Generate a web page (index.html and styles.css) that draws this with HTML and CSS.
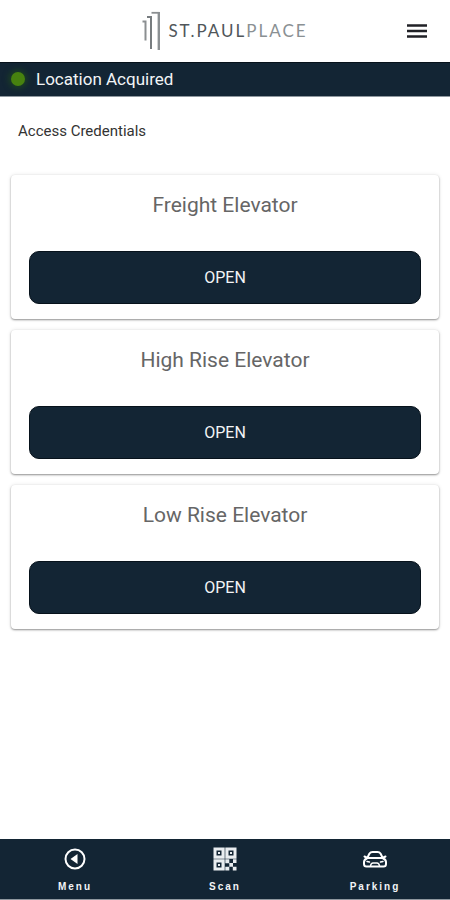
FILE: index.html
```html
<!DOCTYPE html>
<html lang="en">
<head>
<meta charset="utf-8">
<meta name="viewport" content="width=device-width, initial-scale=1">
<title>St. Paul Place</title>
<link rel="stylesheet" href="styles.css">
</head>
<body>
<header class="topbar">
  <a class="brand" href="#" aria-label="St. Paul Place home">
    <svg class="brand-mark" width="20" height="40" viewBox="0 0 20 40" fill="none" aria-hidden="true">
      <path d="M0.500 10.500h3v19" stroke="#8b8f91" stroke-width="2"/>
      <path d="M5 6h4v32" stroke="#777c7f" stroke-width="2"/>
      <path d="M9.500 1.800h8" stroke="#8b8f91" stroke-width="1.800"/>
      <path d="M16.800 1v38" stroke="#8b9093" stroke-width="2.400"/>
    </svg>
    <span class="brand-name"><span class="brand-strong">ST.PAUL</span>PLACE</span>
  </a>
  <button class="menu-button" type="button" aria-label="Open menu">
    <svg width="22" height="16" viewBox="0 0 22 16" aria-hidden="true">
      <path d="M1 2.500h20M1 8h20M1 13.500h20" stroke="#202126" stroke-width="2.500"/>
    </svg>
  </button>
</header>
<div class="status" role="status"><span class="status-dot"></span>Location Acquired</div>
<main class="content">
  <h1 class="heading">Access Credentials</h1>
  <div class="cards">
    <section class="card">
      <h2 class="card-title">Freight Elevator</h2>
      <button class="open-button" type="button">OPEN</button>
    </section>
    <section class="card">
      <h2 class="card-title">High Rise Elevator</h2>
      <button class="open-button" type="button">OPEN</button>
    </section>
    <section class="card">
      <h2 class="card-title">Low Rise Elevator</h2>
      <button class="open-button" type="button">OPEN</button>
    </section>
  </div>
</main>
<nav class="tabs">
  <a class="tab" href="#">
    <svg width="24" height="24" viewBox="0 0 24 24" aria-hidden="true">
      <circle cx="12" cy="12" r="9.500" fill="none" stroke="#fff" stroke-width="2"/>
      <path d="M7.500 12l7-5v10z" fill="#fff"/>
    </svg>
    Menu
  </a>
  <a class="tab" href="#">
    <svg width="24" height="24" viewBox="0 0 24 24" aria-hidden="true">
      <path fill="#e9edf0" fill-rule="evenodd" d="M0.500 0.500h11.200v11.200H0.500zM3.500 3.500v5h5v-5zM12.300 0.500h11.200v11.200H12.300zM15.500 3.500v5h5v-5zM0.500 12.300h11.200v11.200H0.500zM3.500 15.500v5h5v-5z"/>
      <path fill="#e9edf0" d="M5 5h2v2H5zM17 5h2v2h-2zM5 17h2v2H5zM12.300 12.300h4v3.700h3.700v3.700h3.500v3.800h-3.700v-3.800h-3.500v-3.500h-4zM20 12.300h3.500V16H20zM12.300 19.700h4v3.800h-4z"/>
    </svg>
    Scan
  </a>
  <a class="tab" href="#">
    <svg width="26" height="24" viewBox="0 0 26 24" fill="none" stroke="#fff" stroke-width="2" stroke-linejoin="round" stroke-linecap="round" aria-hidden="true">
      <path d="M5.500 10.500L7.500 6.500Q8.500 5 10.500 5h5q2 0 3 1.500l2 4"/>
      <path d="M2.500 9.500L5.500 11h15l3-1.500M5.500 11Q2 12.500 2 15v2q0 2.500 2.500 2.500h17Q24 19.500 24 17v-2q0-2.500-3.500-4"/>
      <path d="M5 14.500l2.500 0.500M21 14.500l-2.500 0.500M8.500 19q0.500-3 2.500-3h4q2 0 2.500 3" stroke-width="1.500"/>
    </svg>
    Parking
  </a>
</nav>
</body>
</html>
```
FILE: styles.css
```css
* {
  box-sizing: border-box;
}

body {
  display: flex;
  flex-direction: column;
  min-height: 100vh;
  margin: 0;
  background: #fff;
  color: #333;
  font-family: Roboto, "Liberation Sans", sans-serif;
}

.topbar {
  display: grid;
  grid-template-columns: 1fr auto 1fr;
  align-items: center;
  height: 62px;
  padding: 0 22px;
}

.brand {
  display: flex;
  grid-column: 2;
  align-items: center;
  gap: 6px;
  color: #8a9093;
  text-decoration: none;
}

.brand-name {
  font: 400 17px/20px Lato, sans-serif;
  letter-spacing: 2px;
}

.brand-strong {
  color: #50565a;
}

.menu-button {
  display: flex;
  justify-self: end;
  padding: 0;
  border: 0;
  background: none;
}

.status {
  display: flex;
  align-items: center;
  gap: 11px;
  height: 35px;
  padding: 0 11px 2px;
  border-top: 1px solid #07121b;
  border-bottom: 1px solid #8f989f;
  background: #132534;
  color: #f2f4f6;
  font-size: 17px;
  line-height: 24px;
}

.status-dot {
  width: 14px;
  height: 14px;
  border-radius: 50%;
  background: #47820f;
  box-shadow: 0 0 6px 2px #1d4420;
}

.content {
  flex: 1;
  padding: 24px 11px;
}

.heading {
  margin: 0 7px 34px;
  font-size: 15px;
  font-weight: 400;
  line-height: 20px;
}

.cards {
  display: grid;
  gap: 11px;
}

.card {
  padding: 16px 18px 15px;
  border-radius: 4px;
  background: #fff;
  box-shadow: 0 1px 2px rgba(0, 0, 0, 0.4), 0 0 4px rgba(0, 0, 0, 0.1);
}

.card-title {
  margin: 0 0 32px;
  color: #666;
  font-size: 21px;
  font-weight: 400;
  line-height: 28px;
  text-align: center;
}

.open-button {
  display: block;
  width: 100%;
  height: 53px;
  border: 1px solid #07121b;
  border-radius: 10px;
  background: #132534;
  color: #f2f4f6;
  font: 400 16px/24px Roboto, "Liberation Sans", sans-serif;
}

.tabs {
  display: grid;
  grid-template-columns: repeat(3, 1fr);
  height: 61px;
  padding-top: 8px;
  border-bottom: 1px solid #8f989f;
  background: #132534;
}

.tab {
  display: flex;
  flex-direction: column;
  align-items: center;
  gap: 8px;
  color: #f2f4f6;
  font: 700 10px/16px "Liberation Sans", sans-serif;
  letter-spacing: 2px;
  text-decoration: none;
}
```
